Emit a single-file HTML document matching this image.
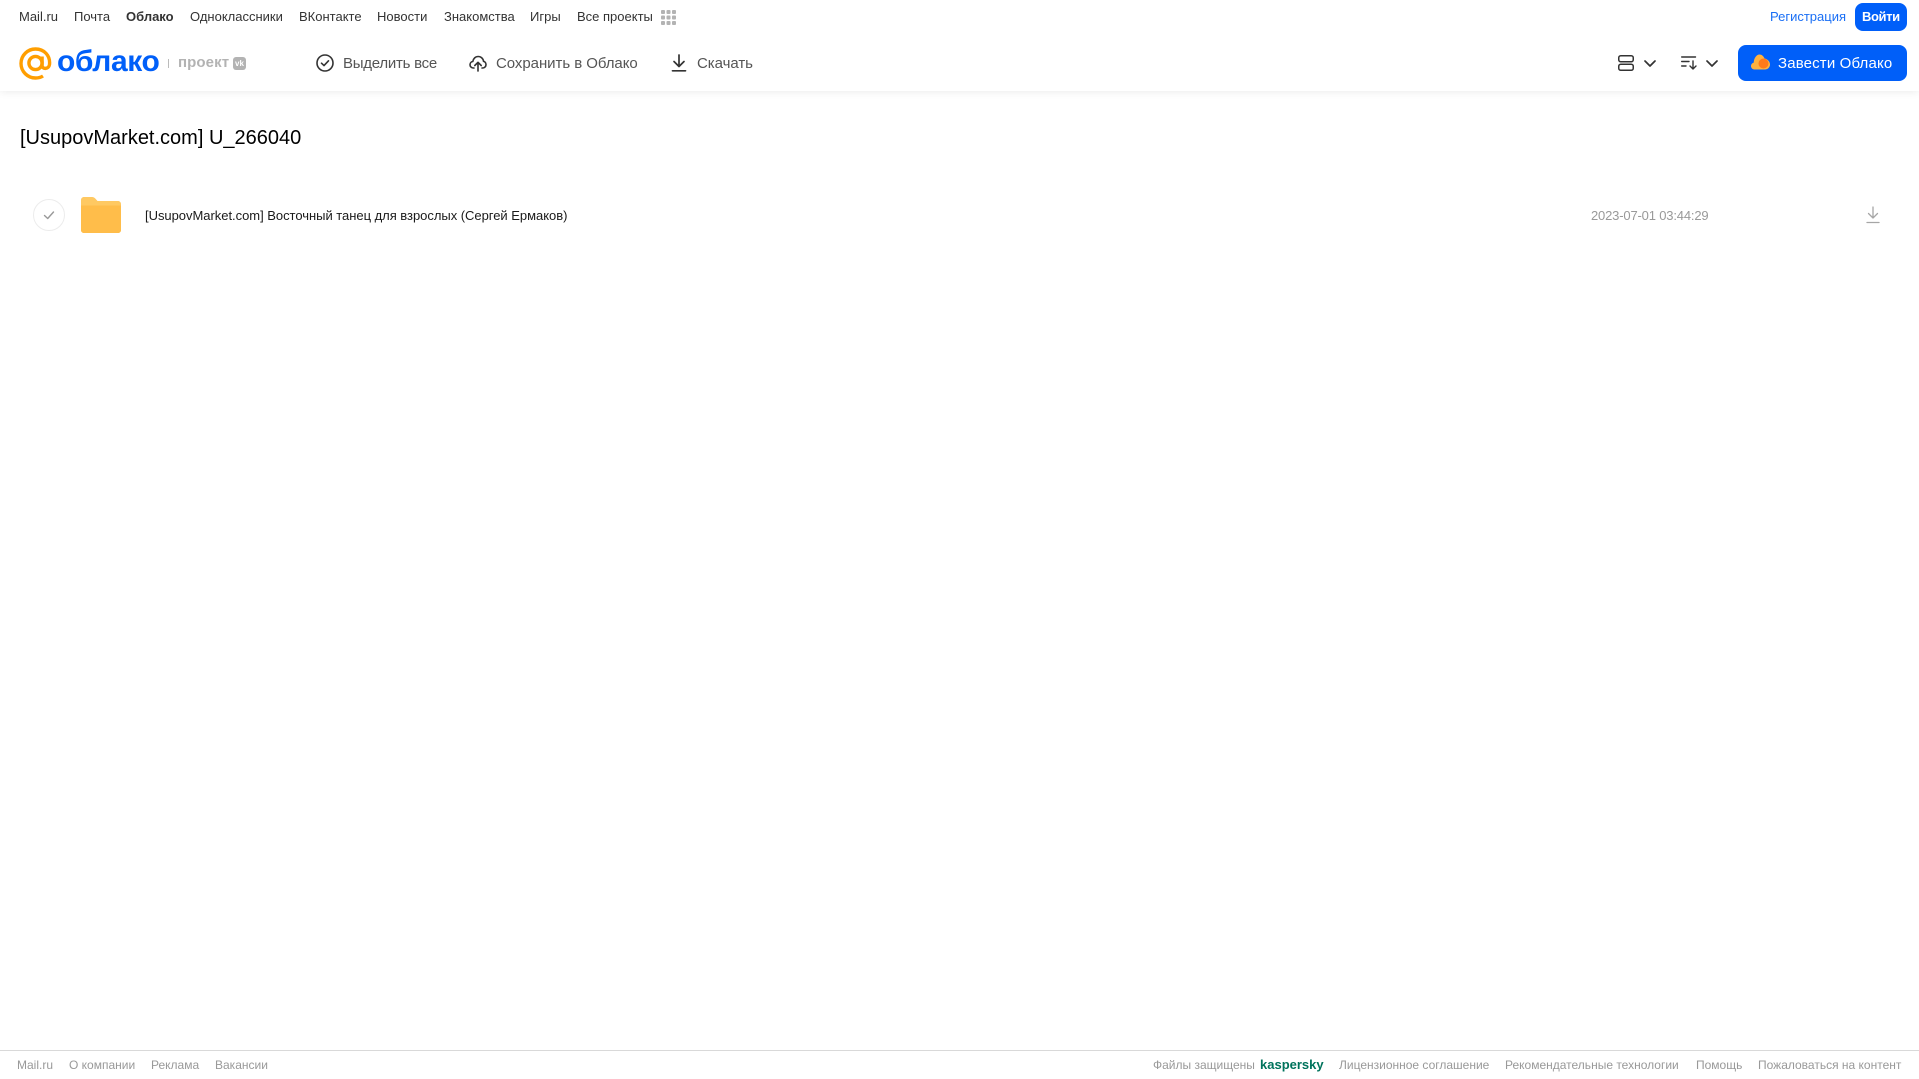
<!DOCTYPE html>
<html lang="ru">
<head>
<meta charset="utf-8">
<title>Облако</title>
<style>
html,body{margin:0;padding:0;background:#fff}
body{width:1919px;height:1079px;position:relative;overflow:hidden;font-family:"Liberation Sans",Arial,sans-serif}
.t{position:absolute;white-space:nowrap;line-height:20px;transform-origin:0 50%}
.n{top:7px;font-size:13px;color:#333}
.a{top:54px;font-size:15px;color:#555;letter-spacing:-.05px}
.f{top:1055px;font-size:12px;color:#999}
svg{position:absolute;display:block}
#hdr{position:absolute;left:0;top:0;width:1919px;height:91px;background:#fff;box-shadow:0 1px 8px rgba(0,0,0,.08)}
.btn{position:absolute;background:#005ff9;border-radius:8px}
#fl{position:absolute;left:0;top:1050px;width:1919px;height:1px;background:#d9d9d9}
</style>
</head>
<body>
<div id="hdr"></div>
<span class="t n" style="left:19px">Mail.ru</span>
<span class="t n" style="left:74px">Почта</span>
<span class="t n" style="left:126px;font-weight:bold">Облако</span>
<span class="t n" style="left:190px">Одноклассники</span>
<span class="t n" style="left:299px">ВКонтакте</span>
<span class="t n" style="left:377px">Новости</span>
<span class="t n" style="left:444px">Знакомства</span>
<span class="t n" style="left:530px">Игры</span>
<span class="t n" style="left:577px">Все проекты</span>
<svg style="left:661px;top:10px" width="15" height="15" viewBox="0 0 15 15" fill="#b3b3b3"><rect x="0" y="0" width="4" height="4" rx="1"/><rect x="5.500" y="0" width="4" height="4" rx="1"/><rect x="11" y="0" width="4" height="4" rx="1"/><rect x="0" y="5.500" width="4" height="4" rx="1"/><rect x="5.500" y="5.500" width="4" height="4" rx="1"/><rect x="11" y="5.500" width="4" height="4" rx="1"/><rect x="0" y="11" width="4" height="4" rx="1"/><rect x="5.500" y="11" width="4" height="4" rx="1"/><rect x="11" y="11" width="4" height="4" rx="1"/></svg>
<span class="t" style="left:1770px;top:7px;font-size:13px;color:#1a6ff5">Регистрация</span>
<div class="btn" style="left:1855px;top:3px;width:52px;height:28px"></div>
<span class="t" style="left:1862px;top:7px;font-size:13px;font-weight:bold;color:#fff;letter-spacing:-.4px">Войти</span>

<svg style="left:19px;top:47px" width="33" height="33" viewBox="0 0 33 33" fill="none" stroke="#ff9e00" stroke-width="3.400"><circle cx="16.500" cy="16" r="6.600"/><path d="M23.100 9.500V18.500C23.100 22.500 29.800 22.500 30.500 17.500C31.500 8.500 25 2 16.500 2C8.500 2 2 8.500 2 16.500C2 24.500 8.500 31 16.500 31C19.500 31 22 30.300 24 29"/></svg>
<span class="t" style="left:57px;top:46px;font-size:30px;line-height:32px;font-weight:bold;color:#005ff9;letter-spacing:-.4px">облако</span>
<div style="position:absolute;left:168px;top:59px;width:1px;height:9px;background:#bbb"></div>
<span class="t" style="left:178px;top:53px;font-size:15px;font-weight:bold;color:#b3b3b3;letter-spacing:.1px">проект</span>
<div style="position:absolute;left:233px;top:57px;width:13px;height:13px;border-radius:3px;background:#b3b3b3;color:#fff;font-size:8px;line-height:13px;text-align:center;font-weight:bold">vk</div>

<svg style="left:316px;top:54px" width="18" height="18" viewBox="0 0 18 18" fill="none" stroke="#333" stroke-width="1.600"><circle cx="9" cy="9" r="8"/><path d="M5.500 9.200L8 11.600L12.500 6.800" stroke-linecap="round" stroke-linejoin="round"/></svg>
<span class="t a" style="left:343px;letter-spacing:-.25px">Выделить все</span>
<svg style="left:469px;top:54px" width="18" height="18" viewBox="0 0 18 18" fill="none" stroke="#333" stroke-width="1.600" stroke-linecap="round" stroke-linejoin="round"><path d="M5 14H4.500C2.500 14 1 12.500 1 10.700C1 9 2.300 7.700 3.800 7.500C4.300 4.500 6.500 2.500 9.200 2.500C12 2.500 14.200 4.500 14.500 7.300C16 7.600 17 9 17 10.600C17 12.500 15.500 14 13.500 14H13"/><path d="M9 17V8.500M5.800 11.500L9 8.300L12.200 11.500"/></svg>
<span class="t a" style="left:496px">Сохранить в Облако</span>
<svg style="left:671px;top:54px" width="16" height="18" viewBox="0 0 16 18" fill="none" stroke="#333" stroke-width="1.700" stroke-linecap="round" stroke-linejoin="round"><path d="M8 1V12M3 7.500L8 12.500L13 7.500"/><path d="M1.500 16.800H14.500"/></svg>
<span class="t a" style="left:697px">Скачать</span>

<svg style="left:1618px;top:55px" width="16" height="16" viewBox="0 0 16 16" fill="none" stroke="#333" stroke-width="1.500"><rect x=".75" y=".75" width="14.500" height="6" rx="2"/><rect x=".75" y="9.250" width="14.500" height="6" rx="2"/></svg>
<svg style="left:1644px;top:60px" width="12" height="7" viewBox="0 0 12 7" fill="none" stroke="#333" stroke-width="1.700" stroke-linecap="round" stroke-linejoin="round"><path d="M1 1L6 6L11 1"/></svg>
<svg style="left:1681px;top:56px" width="17" height="14" viewBox="0 0 17 14" fill="none" stroke="#333" stroke-width="1.400" stroke-linecap="round" stroke-linejoin="round"><path d="M.7 1H14.500M.7 5.500H8M.7 10H5"/><path d="M12 5V13M9 10L12 13L15 10"/></svg>
<svg style="left:1706px;top:60px" width="12" height="7" viewBox="0 0 12 7" fill="none" stroke="#333" stroke-width="1.700" stroke-linecap="round" stroke-linejoin="round"><path d="M1 1L6 6L11 1"/></svg>
<div class="btn" style="left:1738px;top:45px;width:169px;height:36px"></div>
<svg style="left:1751px;top:54px" width="19" height="16" viewBox="0 0 19 16"><path d="M3.500 15.500C1.500 15.500 0 14 0 12C0 10.300 1.200 9 2.700 8.600C3 4 5.500 .5 8.500 .5C10.800 .5 12.500 2 13.500 4.500C16.500 5 19 7.500 19 10.500C19 13.500 16.500 15.500 14 15.500Z" fill="#ffb23f"/><circle cx="12.500" cy="9.500" r="5" fill="#ff7a1a"/></svg>
<span class="t" style="left:1778px;top:54px;font-size:15px;color:#fff;letter-spacing:.15px">Завести Облако</span>

<span class="t" style="left:20px;top:126px;font-size:20px;line-height:24px;color:#000">[UsupovMarket.com] U_266040</span>

<svg style="left:33px;top:199px" width="32" height="32" viewBox="0 0 32 32" fill="none"><circle cx="16" cy="16" r="15.500" stroke="#ececec"/><path d="M11.500 16.500L14.700 19.500L20.500 13" stroke="#999" stroke-width="1.400" stroke-linecap="round" stroke-linejoin="round"/></svg>
<svg style="left:81px;top:197px" width="40" height="36" viewBox="0 0 40 36"><path d="M0 3C0 1.300 1.300 0 3 0H11C12.500 0 13.500 .6 14.500 1.800L16.500 4H37C38.700 4 40 5.300 40 7V33C40 34.700 38.700 36 37 36H3C1.300 36 0 34.700 0 33Z" fill="#ffc962"/><path d="M0 8.500H40V33C40 34.700 38.700 36 37 36H3C1.300 36 0 34.700 0 33Z" fill="#ffbd4a"/></svg>
<span class="t" style="left:145px;top:206px;font-size:13px;color:#1a1a1a;letter-spacing:-.03px">[UsupovMarket.com] Восточный танец для взрослых (Сергей Ермаков)</span>
<span class="t" style="left:1591px;top:206px;font-size:13px;color:#999;letter-spacing:-.17px">2023-07-01 03:44:29</span>
<svg style="left:1866px;top:206px" width="14" height="18" viewBox="0 0 14 18" fill="none" stroke="#a6a6a6" stroke-width="1.300" stroke-linecap="round" stroke-linejoin="round"><path d="M7 1V12M2.500 7.500L7 12L11.500 7.500"/><path d="M1 16.500H13"/></svg>

<div id="fl"></div>
<span class="t f" style="left:17px">Mail.ru</span>
<span class="t f" style="left:69px">О компании</span>
<span class="t f" style="left:151px">Реклама</span>
<span class="t f" style="left:215px">Вакансии</span>
<span class="t f" style="left:1153px">Файлы защищены</span>
<span class="t f" style="left:1260px;font-weight:bold;font-size:13px;color:#00735c">kaspersky</span>
<span class="t f" style="left:1339px">Лицензионное соглашение</span>
<span class="t f" style="left:1505px">Рекомендательные технологии</span>
<span class="t f" style="left:1696px">Помощь</span>
<span class="t f" style="left:1758px">Пожаловаться на контент</span>
</body>
</html>
